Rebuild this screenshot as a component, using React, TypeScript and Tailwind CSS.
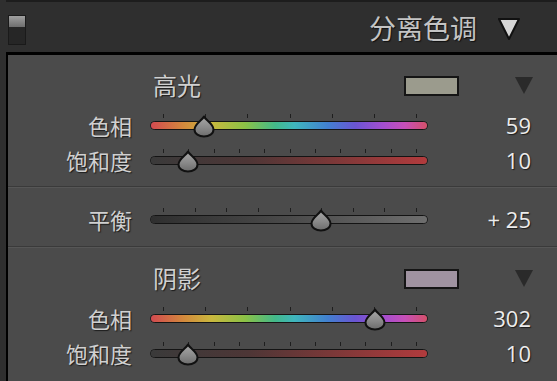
const cjk = "font-['Noto_Sans_CJK_SC','Noto_Sans',sans-serif]";
const shadow = "[text-shadow:1px_1px_1px_#1c1c1c]";

const HUE =
  "bg-[linear-gradient(to_right,#d24a50,#d38a3c_12%,#c9b83e_22%,#8cc246_34%,#43b98a_45%,#3fb6bd_52%,#4280d0_64%,#6a55d2_74%,#a34ed0_84%,#c74fb8_92%,#d4506a)]";
const SAT = "bg-[linear-gradient(to_right,#3a3a3a,#4d3636_35%,#7a3838_65%,#b23b3d)]";
const BAL = "bg-[linear-gradient(to_right,#2f2f2f,#4a4a4a_50%,#6e6e6e)]";

function Thumb({ x }: { x: number }) {
  return (
    <svg
      className="absolute top-[2px] h-[23px] w-[24px]"
      style={{ left: x - 12 }}
      viewBox="0 0 24 23"
    >
      <defs>
        <linearGradient id="tg" x1="0" y1="0" x2="0" y2="1">
          <stop offset="0" stopColor="#a8a8a8" />
          <stop offset="0.55" stopColor="#8a8a8a" />
          <stop offset="1" stopColor="#6c6c6c" />
        </linearGradient>
      </defs>
      <path
        d="M12 1.5 C13.5 5 21.5 9 21.5 14.5 C21.5 19 17 21.5 12 21.5 C7 21.5 2.5 19 2.5 14.5 C2.5 9 10.5 5 12 1.5 Z"
        fill="url(#tg)"
        stroke="#111"
        strokeWidth="2"
        strokeLinejoin="round"
      />
    </svg>
  );
}

function Slider({ ticks, pos, track }: { ticks: number; pos: number; track: string }) {
  const marks = Array.from({ length: ticks }, (_, i) => 13 + (253 * i) / (ticks - 1));
  return (
    <div className="relative h-[26px] w-[278px]">
      {marks.map((m, i) => (
        <div key={i} className="absolute top-[1px] h-[4px] w-px bg-[#1e1e1e]" style={{ left: m }} />
      ))}
      <div className="absolute left-0 right-0 top-[8px] h-[9px] rounded-full border-[1.5px] border-[#141414] p-0">
        <div className={`h-full w-full rounded-full ${track}`} />
      </div>
      <Thumb x={13 + 253 * pos} />
    </div>
  );
}

function Row({
  label,
  value,
  ticks,
  pos,
  track,
  h,
}: {
  label: string;
  value: string;
  ticks: number;
  pos: number;
  track: string;
  h: string;
}) {
  return (
    <div className={`flex items-center ${h}`}>
      <div className={`w-[124px] text-right text-[22px] leading-none text-[#d0d0d0] ${cjk} ${shadow}`}>
        {label}
      </div>
      <div className="ml-[18px] pt-[1px]">
        <Slider ticks={ticks} pos={pos} track={track} />
      </div>
      <div
        className={`flex-1 pr-[26px] text-right text-[22px] leading-none text-[#ececec] font-['Open_Sans',sans-serif] ${shadow}`}
      >
        {value}
      </div>
    </div>
  );
}

function Title({ text, swatch }: { text: string; swatch: string }) {
  return (
    <div className="flex h-[44px] items-center">
      <div className={`ml-[145px] text-[24px] leading-none text-[#d0d0d0] ${cjk} ${shadow}`}>{text}</div>
      <div className={`ml-auto mt-[2px] h-[20px] w-[55px] border-2 border-[#151515] ${swatch}`} />
      <svg className="ml-[56px] mr-[24px] h-[17px] w-[18px]" viewBox="0 0 18 17">
        <polygon points="0,0 18,0 9,17" fill="#2a2a2a" />
      </svg>
    </div>
  );
}

function Separator() {
  return (
    <div>
      <div className="h-px bg-[#3a3a3a]" />
      <div className="h-px bg-[#565656]" />
    </div>
  );
}

export default function App() {
  return (
    <div className="flex h-[381px] w-[557px] flex-col overflow-hidden bg-[#2f2f2f]">
      <div className="ml-[6px] h-[2px] bg-[#1d1d1d]" />
      <div className="flex h-[50px] items-center">
        <div className="ml-[8px] mt-[5px] flex h-[30px] w-[18px] flex-col border-[1.5px] border-[#1a1a1a] bg-[#262626]">
          <div className="h-[11px] bg-[linear-gradient(#a0a0a0,#6e6e6e)]" />
        </div>
        <div
          className={`ml-auto text-[27px] leading-none tracking-[0px] text-[#c4c4c4] ${cjk} [text-shadow:1px_1px_1px_#111]`}
        >
          分离色调
        </div>
        <svg className="ml-[20px] mr-[36px] mt-[4px] h-[24px] w-[24px]" viewBox="0 0 24 24">
          <polygon points="2,2 22,2 12,22" fill="#d6d6d6" stroke="#111" strokeWidth="2" strokeLinejoin="round" />
        </svg>
      </div>
      <div className="ml-[6px] flex-1 border-l-2 border-t-[3px] border-black bg-[#4b4b4b]">
        <div className="pt-[8px]">
          <Title text="高光" swatch="bg-[#9b9b8d]" />
          <Row label="色相" value="59" ticks={7} pos={59 / 360} track={HUE} h="h-[36px]" />
          <Row label="饱和度" value="10" ticks={11} pos={0.1} track={SAT} h="h-[34px]" />
          <div className="h-[9px]" />
        </div>
        <Separator />
        <div className="flex h-[58px] items-center pt-[4px]">
          <div className="w-full">
            <Row label="平衡" value="+ 25" ticks={9} pos={0.625} track={BAL} h="h-[36px]" />
          </div>
        </div>
        <Separator />
        <div className="pt-[8px]">
          <Title text="阴影" swatch="bg-[#a093a1]" />
          <Row label="色相" value="302" ticks={7} pos={302 / 360} track={HUE} h="h-[36px]" />
          <Row label="饱和度" value="10" ticks={11} pos={0.1} track={SAT} h="h-[34px]" />
        </div>
      </div>
    </div>
  );
}
